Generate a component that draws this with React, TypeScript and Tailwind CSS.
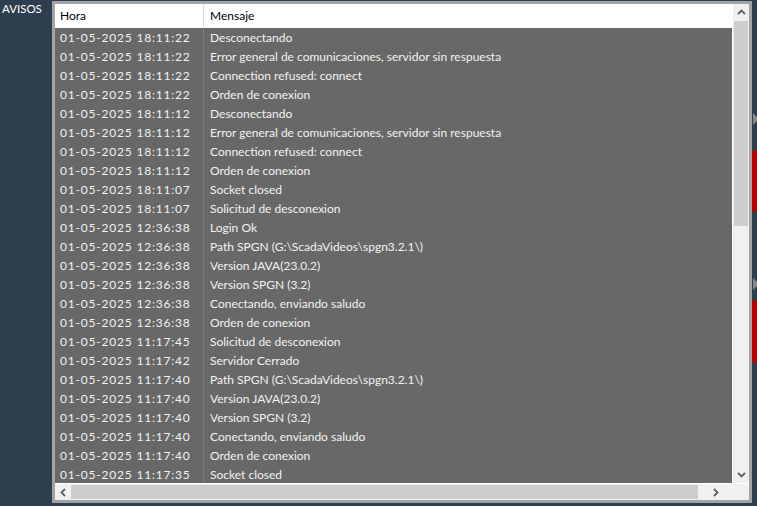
import React from "react";

const rows: [string, string][] = [
  ["01-05-2025 18:11:22", "Desconectando"],
  ["01-05-2025 18:11:22", "Error general de comunicaciones, servidor sin respuesta"],
  ["01-05-2025 18:11:22", "Connection refused: connect"],
  ["01-05-2025 18:11:22", "Orden de conexion"],
  ["01-05-2025 18:11:12", "Desconectando"],
  ["01-05-2025 18:11:12", "Error general de comunicaciones, servidor sin respuesta"],
  ["01-05-2025 18:11:12", "Connection refused: connect"],
  ["01-05-2025 18:11:12", "Orden de conexion"],
  ["01-05-2025 18:11:07", "Socket closed"],
  ["01-05-2025 18:11:07", "Solicitud de desconexion"],
  ["01-05-2025 12:36:38", "Login Ok"],
  ["01-05-2025 12:36:38", "Path SPGN (G:\\ScadaVideos\\spgn3.2.1\\)"],
  ["01-05-2025 12:36:38", "Version JAVA(23.0.2)"],
  ["01-05-2025 12:36:38", "Version SPGN (3.2)"],
  ["01-05-2025 12:36:38", "Conectando, enviando saludo"],
  ["01-05-2025 12:36:38", "Orden de conexion"],
  ["01-05-2025 11:17:45", "Solicitud de desconexion"],
  ["01-05-2025 11:17:42", "Servidor Cerrado"],
  ["01-05-2025 11:17:40", "Path SPGN (G:\\ScadaVideos\\spgn3.2.1\\)"],
  ["01-05-2025 11:17:40", "Version JAVA(23.0.2)"],
  ["01-05-2025 11:17:40", "Version SPGN (3.2)"],
  ["01-05-2025 11:17:40", "Conectando, enviando saludo"],
  ["01-05-2025 11:17:40", "Orden de conexion"],
  ["01-05-2025 11:17:35", "Socket closed"],
];

const Chevron = ({ dir }: { dir: "up" | "down" | "left" | "right" }) => {
  const d =
    dir === "up"
      ? "M1 6 L4.5 2.5 L8 6"
      : dir === "down"
      ? "M1 3 L4.5 6.5 L8 3"
      : dir === "left"
      ? "M6 1 L2.5 4.5 L6 8"
      : "M3 1 L6.5 4.5 L3 8";
  return (
    <svg width="9" height="9" viewBox="0 0 9 9">
      <path d={d} fill="none" stroke="#606060" strokeWidth="1.8" />
    </svg>
  );
};

export default function App() {
  return (
    <div
      className="relative w-[757px] h-[506px] bg-[#2d3e4e] overflow-hidden flex"
      style={{ fontFamily: 'Lato, "Noto Sans", sans-serif' }}
    >
      <div className="w-[52px] pl-[2px] pt-[1px] text-[11.5px] text-white leading-[16px]">AVISOS</div>

      <div className="mt-[1px] w-[700px] h-[502px] border-[3px] border-[#a3a3a3] bg-white flex flex-col">
        <div className="flex flex-1 min-h-0">
          <div className="flex flex-col w-[678px] border-r border-white">
            <div className="h-[24px] flex bg-white text-[12px] text-black leading-[24px]">
              <div className="w-[149px] pl-[5px] border-r border-[#d8d8d8]">Hora</div>
              <div className="flex-1 pl-[6px]">Mensaje</div>
            </div>
            <div className="flex-1 bg-[#686868] relative overflow-hidden">
              <div className="absolute left-[148px] top-0 bottom-0 w-px bg-[#7a7a7a]" />
              {rows.map(([h, m], i) => (
                <div key={i} className="flex h-[19px] leading-[19px] text-[12px] text-[#f2f2f2] whitespace-nowrap">
                  <div className="w-[149px] pl-[5px] tracking-[0.8px]">{h}</div>
                  <div className="flex-1 pl-[6px]">{m}</div>
                </div>
              ))}
            </div>
          </div>
          <div className="w-[16px] bg-[#f0f0f0] flex flex-col">
            <div className="h-[17px] flex items-center justify-center">
              <Chevron dir="up" />
            </div>
            <div className="h-[205px] mx-[1px] bg-[#cdcdcd]" />
            <div className="flex-1" />
            <div className="h-[17px] flex items-center justify-center">
              <Chevron dir="down" />
            </div>
          </div>
        </div>
        <div className="h-[17px] flex bg-[#f0f0f0] border-t border-white">
          <div className="w-[678px] flex items-center">
            <div className="w-[16px] flex items-center justify-center">
              <Chevron dir="left" />
            </div>
            <div className="w-[627px] h-[14px] bg-[#cdcdcd]" />
            <div className="flex-1 flex items-center justify-center">
              <Chevron dir="right" />
            </div>
          </div>
          <div className="flex-1 bg-[#f0f0f0]" />
        </div>
      </div>

      {/* background items peeking on the right */}
      <div className="absolute left-[753px] top-[113px] w-0 h-0 border-y-[6px] border-y-transparent border-l-[6px] border-l-[#8a8a8a]" />
      <div className="absolute left-[752px] top-[150px] w-[8px] h-[62px] bg-[#c00000] rounded-l-[4px]" />
      <div className="absolute left-[753px] top-[278px] w-0 h-0 border-y-[6px] border-y-transparent border-l-[6px] border-l-[#8a8a8a]" />
      <div className="absolute left-[752px] top-[300px] w-[8px] h-[63px] bg-[#c00000] rounded-l-[4px]" />
    </div>
  );
}
